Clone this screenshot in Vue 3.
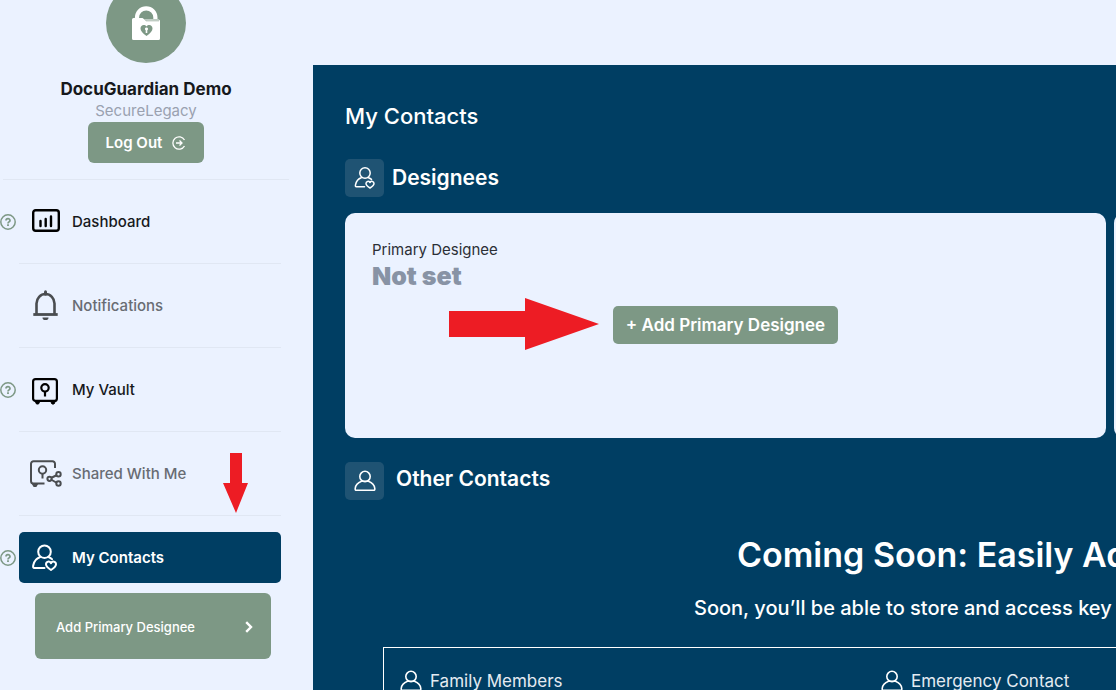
<script setup>
const items = [
  { label: 'Dashboard', icon: 'dashboard', help: true },
  { label: 'Notifications', icon: 'bell', muted: true },
  { label: 'My Vault', icon: 'vault', help: true },
  { label: 'Shared With Me', icon: 'shared', muted: true, pointer: true },
  { label: 'My Contacts', icon: 'contacts', help: true, active: true },
]
const categories = ['Family Members', 'Emergency Contact']
</script>

<template>
  <div class="page">
    <aside class="sidebar">
      <header class="profile">
        <div class="avatar">
          <svg width="30" height="36" viewBox="0 0 30 36" aria-hidden="true">
            <path d="M6 14v-1.500a9.200 9.200 0 0 1 18.400 0V14" fill="none" stroke="#fff" stroke-width="4.200" />
            <path d="M2.500 13h9l2 1.500h14a1.500 1.500 0 0 1 1.500 1.500v17.500a1.500 1.500 0 0 1-1.500 1.500h-25A1.500 1.500 0 0 1 1 33.500v-19A1.500 1.500 0 0 1 2.500 13z" fill="#fff" />
            <path d="M14 14.800l1 1h13" fill="none" stroke="#7d9885" stroke-width="0.700" />
            <path d="M15.500 31c-4-3-6-5-6-7.500C9.500 20 13.500 19 15.500 21.500 17.500 19 21.500 20 21.500 23.500c0 2.500-2 4.500-6 7.500z" fill="#7d9885" />
            <path d="M15.500 22.500a1.500 1.500 0 0 1 .8 2.800V28h-1.600v-2.700a1.500 1.500 0 0 1 .8-2.800z" fill="#fff" />
          </svg>
        </div>
        <h2 class="name">DocuGuardian Demo</h2>
        <p class="org">SecureLegacy</p>
        <button class="logout" type="button">
          Log Out
          <svg width="14" height="14" viewBox="0 0 14 14" fill="none" stroke="#fff" stroke-width="1.300" aria-hidden="true">
            <path d="M12.500 4A6.200 6.200 0 1 0 12.500 10M4 7h5.500M7.500 4.500 10 7 7.500 9.500" />
          </svg>
        </button>
      </header>

      <nav>
        <ul class="menu">
          <li v-for="item in items" :key="item.label" class="entry">
            <button v-if="item.help" class="help" type="button" :aria-label="'Help: ' + item.label">
              <svg width="16" height="16" viewBox="0 0 16 16" fill="none" stroke="#7d9885" aria-hidden="true">
                <circle cx="8" cy="8" r="7.200" stroke-width="1.500" />
                <path d="M6 6.600C6 4 10 4 10 6.400 10 8 8 7.700 8 9.400" stroke-width="1.700" />
                <path d="M8 10.300v1.700" stroke-width="1.800" />
              </svg>
            </button>
            <span v-else></span>
            <div class="cell" :class="{ last: item.active }">
              <a href="#" class="link" :class="{ muted: item.muted, active: item.active }">
                <svg v-if="item.icon === 'dashboard'" width="34" height="34" viewBox="0 0 34 34" fill="none" stroke="#000" stroke-width="2.400" aria-hidden="true">
                  <rect x="4.200" y="5.200" width="25.600" height="20.600" rx="2.500" />
                  <path d="M11.500 16v5M16.700 14v7M22 11.500V21" stroke-linecap="round" />
                </svg>
                <svg v-else-if="item.icon === 'bell'" width="34" height="34" viewBox="0 0 34 34" fill="none" stroke="#4a4d50" stroke-width="2.600" aria-hidden="true">
                  <path d="M7.500 25.500V14.500a9 9.500 0 0 1 18 0v11" />
                  <path d="M4.300 25.500h24.400" stroke-width="2.800" />
                  <path d="M16.500 2.800v2.500" stroke-width="3" stroke-linecap="round" />
                  <path d="M13.500 28.500h6a3 2.600 0 0 1-6 0z" fill="#4a4d50" stroke="none" />
                </svg>
                <svg v-else-if="item.icon === 'vault'" width="34" height="34" viewBox="0 0 34 34" fill="none" stroke="#000" stroke-width="2.200" aria-hidden="true">
                  <rect x="4.100" y="6.100" width="23.800" height="21.800" rx="2.500" />
                  <circle cx="16" cy="14.800" r="3.700" />
                  <path d="M16 18.500v5" />
                  <path d="M6 28h5l-1.500 3h-2zM21.500 28h5L25 31h-2z" fill="#000" stroke-width="1" />
                </svg>
                <svg v-else-if="item.icon === 'shared'" width="34" height="34" viewBox="0 0 34 34" fill="none" stroke="#4a4d50" stroke-width="2" aria-hidden="true">
                  <path d="M15.500 26.500H4.500A2.500 2.500 0 0 1 2 24V6.800a2.500 2.500 0 0 1 2.500-2.500h19A2.500 2.500 0 0 1 26 6.800V11" />
                  <circle cx="13.500" cy="13" r="3.700" />
                  <path d="M13.500 16.700V21.500M22 21l6-3M22 22.500l6 3.500" />
                  <path d="M4 27h4l-1.200 2H5.200z" fill="#4a4d50" />
                  <circle cx="20.500" cy="21.800" r="2.100" />
                  <circle cx="29.500" cy="17.300" r="2.200" />
                  <circle cx="29.500" cy="26.500" r="2.200" />
                </svg>
                <svg v-else width="34" height="34" viewBox="0 0 34 34" fill="none" stroke="#fff" stroke-width="2" stroke-linecap="round" stroke-linejoin="round" aria-hidden="true">
                  <circle cx="15.500" cy="10.700" r="6.300" />
                  <path d="M15.500 27H5.500C4 27 4 26 4.200 24.500c.8-4.200 3.300-7.200 7-8.500M19.500 16c1.500.6 2.700 1.300 3.500 2.200" />
                  <path d="M22 29c-3.500-2.200-5-3.700-5-5.700 0-3 3.500-3.600 5-1.200 1.500-2.400 5-1.800 5 1.200 0 2-1.500 3.500-5 5.700z" />
                </svg>
                {{ item.label }}
              </a>
              <svg v-if="item.pointer" class="pointer-down" width="25" height="60" viewBox="0 0 25 60" aria-hidden="true">
                <path d="M7 0h12v30h6L13 60 0 30h7z" fill="#ed1c24" />
              </svg>
            </div>
          </li>
        </ul>
        <a href="#" class="submenu">
          Add Primary Designee
          <svg width="8" height="12" viewBox="0 0 8 12" fill="none" stroke="#fff" stroke-width="2.400" aria-hidden="true">
            <path d="M1.200 1.200 6 6l-4.800 4.800" />
          </svg>
        </a>
      </nav>
    </aside>

    <main class="main">
      <h1 class="title">My Contacts</h1>

      <section>
        <div class="heading">
          <span class="tile">
            <svg width="24" height="24" viewBox="0 0 24 24" fill="none" stroke="#fff" stroke-width="1.500" stroke-linecap="round" stroke-linejoin="round" aria-hidden="true">
              <circle cx="12" cy="7" r="5.200" />
              <path d="M11.500 20.800H3.500c-1.200 0-1.200-.8-1-2 .7-3.400 2.700-6 5.800-7M15.500 11.700c1.300.5 2.300 1.100 3 1.700" />
              <path d="M17 22c-2.800-1.700-4-3-4-4.500 0-2.400 2.800-2.800 4-1 1.200-1.800 4-1.400 4 1 0 1.500-1.200 2.800-4 4.500z" />
            </svg>
          </span>
          <h2>Designees</h2>
        </div>
        <div class="cards">
          <article class="card">
            <p class="card-label">Primary Designee</p>
            <p class="card-value">Not set</p>
            <div class="card-action">
              <button class="add" type="button">+ Add Primary Designee</button>
              <svg class="pointer-right" width="150" height="52" viewBox="0 0 150 52" aria-hidden="true">
                <path d="M0 13h76V0l74 26-74 26V39H0z" fill="#ed1c24" />
              </svg>
            </div>
          </article>
          <article class="card"></article>
        </div>
      </section>

      <section>
        <div class="heading other">
          <span class="tile">
            <svg width="22" height="22" viewBox="0 0 22 22" fill="none" stroke="#fff" stroke-width="1.600" stroke-linejoin="round" aria-hidden="true">
              <circle cx="11" cy="6.500" r="5.200" />
              <path d="M7.500 11.200C4 12.500 1.500 15 1.200 18.500c-.1 1.400.3 1.800 1.300 1.800h17c1 0 1.400-.4 1.300-1.800-.3-3.500-2.800-6-6.300-7.300z" />
            </svg>
          </span>
          <h2>Other Contacts</h2>
        </div>
        <div class="soon">
          <h3>Coming Soon: Easily Add</h3>
          <p>Soon, you’ll be able to store and access key</p>
        </div>
        <ul class="categories">
          <li v-for="name in categories" :key="name">
            <svg width="22" height="22" viewBox="0 0 22 22" fill="none" stroke="#fff" stroke-width="1.600" stroke-linejoin="round" aria-hidden="true">
              <circle cx="11" cy="6.500" r="5.200" />
              <path d="M7.500 11.200C4 12.500 1.500 15 1.200 18.500c-.1 1.400.3 1.800 1.300 1.800h17c1 0 1.400-.4 1.300-1.800-.3-3.500-2.800-6-6.300-7.300z" />
            </svg>
            {{ name }}
          </li>
        </ul>
      </section>
    </main>
  </div>
</template>

<style>
body {
  margin: 0;
  background: #ebf2ff;
}
</style>

<style scoped>
* {
  box-sizing: border-box;
}
h1, h2, h3, p, ul {
  margin: 0;
  padding: 0;
}
ul {
  list-style: none;
}
svg {
  display: block;
  flex: none;
}
button {
  border: 0;
  padding: 0;
  font: inherit;
  cursor: pointer;
}
a {
  text-decoration: none;
}
.page {
  display: flex;
  height: 100vh;
  overflow: hidden;
  background: #ebf2ff;
  font-family: Inter, "Open Sans", sans-serif;
  color: #17191c;
}
.sidebar {
  flex: none;
  width: 313px;
  padding-right: 21px;
  margin-top: -17px;
}
.profile {
  display: flex;
  flex-direction: column;
  align-items: center;
  margin: 0 3px;
  padding-bottom: 16px;
  border-bottom: 1px solid #e0e7f3;
}
.avatar {
  display: flex;
  align-items: center;
  justify-content: center;
  width: 80px;
  height: 80px;
  border-radius: 50%;
  background: #7d9885;
}
.name {
  margin-top: 14px;
  font-size: 17px;
  line-height: 24px;
  font-weight: 700;
}
.org {
  font-size: 15px;
  line-height: 20px;
  color: #9aa1b0;
}
.logout {
  display: flex;
  align-items: center;
  gap: 10px;
  height: 41px;
  margin-top: 1px;
  padding: 0 18px;
  border-radius: 6px;
  background: #7d9885;
  color: #fff;
  font-size: 15px;
  font-weight: 600;
}
.entry {
  display: grid;
  grid-template-columns: 19px 1fr;
  align-items: center;
  margin-right: 11px;
}
.help {
  background: none;
}
.cell {
  position: relative;
  padding: 16px 0;
  border-bottom: 1px solid #e0e7f3;
}
.cell.last {
  padding-bottom: 10px;
  border-bottom: 0;
}
.entry:has(.last) .help {
  margin-bottom: -6px;
}
.link {
  display: flex;
  align-items: center;
  gap: 9px;
  height: 51px;
  padding-left: 10px;
  border-radius: 5px;
  color: #17191c;
  font-size: 15px;
  font-weight: 500;
}
.link.muted {
  color: #686c73;
}
.link.active {
  background: #003e63;
  color: #fff;
  font-weight: 600;
}
.pointer-down {
  position: absolute;
  right: 33px;
  bottom: 2px;
}
.submenu {
  display: flex;
  align-items: center;
  justify-content: space-between;
  height: 66px;
  margin: 0 21px 0 35px;
  padding: 2px 18px 0 21px;
  border-radius: 6px;
  background: #7d9885;
  color: #fff;
  font-size: 13px;
  font-weight: 500;
}
.main {
  flex: 1;
  min-width: 0;
  margin-top: 65px;
  padding: 36px 0 0 32px;
  overflow: hidden;
  background: #003e63;
  color: #fff;
}
.title {
  font-size: 22px;
  line-height: 30px;
  font-weight: 500;
}
.heading {
  display: flex;
  align-items: center;
  gap: 8px;
  margin-top: 28px;
}
.heading h2 {
  font-size: 21px;
  line-height: 28px;
  font-weight: 600;
}
.heading.other {
  align-items: flex-start;
  gap: 12px;
  margin-top: 24px;
}
.heading.other h2 {
  line-height: 34px;
}
.tile {
  display: flex;
  align-items: center;
  justify-content: center;
  width: 39px;
  height: 38px;
  border-radius: 5px;
  background: #1f5373;
}
.cards {
  display: flex;
  gap: 8px;
  margin-top: 16px;
}
.card {
  flex: 0 0 calc(100% - 10px);
  min-height: 225px;
  padding: 27px;
  border-radius: 10px;
  background: #ebf2ff;
  color: #2b2f36;
}
.card-label {
  font-size: 15px;
  line-height: 20px;
}
.card-value {
  font-size: 25px;
  line-height: 32px;
  font-weight: 900;
  color: #8893a5;
}
.card-action {
  position: relative;
  width: fit-content;
  margin: 14px auto 0;
}
.add {
  height: 38px;
  padding: 0 13px;
  border-radius: 5px;
  background: #7d9885;
  color: #fff;
  font-size: 17px;
  font-weight: 600;
}
.pointer-right {
  position: absolute;
  top: -8px;
  right: calc(100% + 14px);
}
.soon {
  margin-top: 32px;
  padding-left: 349px;
  white-space: nowrap;
}
.soon h3 {
  padding-left: 43px;
  font-size: 34px;
  line-height: 46px;
  font-weight: 600;
}
.soon p {
  margin-top: 16px;
  font-size: 20px;
  line-height: 28px;
  font-weight: 500;
}
.categories {
  display: grid;
  grid-template-columns: 481px 1fr;
  margin: 25px -1px 0 38px;
  padding: 21px 16px;
  border: 1px solid #fff;
}
.categories li {
  display: flex;
  align-items: center;
  gap: 8px;
  font-size: 17px;
  line-height: 24px;
  color: #e4ebf2;
  white-space: nowrap;
}
</style>
